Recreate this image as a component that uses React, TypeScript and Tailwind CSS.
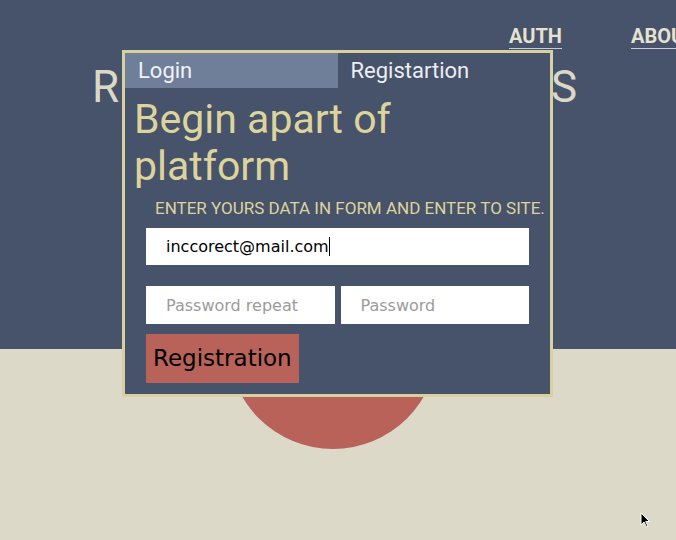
import React from 'react';

const App: React.FC = () => {
  return (
    <div className="relative w-full h-[540px] overflow-hidden bg-[#dcd9c9] font-['Roboto',sans-serif]">
      {/* Hero */}
      <section className="h-[349px] bg-[#47526b]">
        <nav className="flex gap-[69px] pl-[509px] pt-[25px] whitespace-nowrap">
          <a className="text-[20px] leading-[22px] font-bold text-[#e6e2d0] border-b border-[#c9cdd6] pb-[1px]">AUTH</a>
          <a className="text-[20px] leading-[22px] font-bold text-[#e6e2d0] border-b border-[#c9cdd6] pb-[1px]">ABOUT</a>
        </nav>
        <h1 className="mt-[13px] ml-[92px] w-[485px] flex justify-between text-[44px] leading-[50px] font-normal text-[#dbd8c6]">
          <span>R</span>
          <span>EGISTRATION</span>
          <span>S</span>
        </h1>
      </section>

      {/* Lower part */}
      <section className="h-[191px]">
        <div className="w-[210px] h-[210px] rounded-full bg-[#b9625a] ml-[228px] -mt-[110px]" />
      </section>

      {/* Modal */}
      <div className="absolute left-[122px] top-[50px] w-[431px] h-[347px] border-[3px] border-[#d8d09f] bg-[#47526b]">
        <div className="grid grid-cols-2 h-[35px]">
          <button className="bg-[#6f7f9a] text-left px-[13px] text-[22px] text-[#f1f2f4]">
            Login
          </button>
          <button className="text-left px-[13px] text-[22px] text-[#eceef1]">
            Registartion
          </button>
        </div>

        <h2 className="mt-[8px] pl-[9px] text-[41px] leading-[47px] text-[#ddd49c]">
          Begin apart of<br />platform
        </h2>
        <p className="mt-[6px] pl-[30px] text-[17px] leading-[24px] text-[#ddd49c] uppercase">
          Enter yours data in form and enter to site.
        </p>

        <div className="px-[21px] mt-[8px] font-['DejaVu_Sans',sans-serif]">
          <div className="h-[37px] bg-white flex items-center pl-[20px] text-[16px] text-black">
            <span>inccorect@mail.com</span>
            <span className="w-px h-[19px] bg-black" />
          </div>
          <div className="grid grid-cols-2 gap-[6px] mt-[21px]">
            <input
              type="password"
              placeholder="Password repeat"
              className="h-[38px] bg-white pl-[20px] text-[16px] placeholder:text-[#9b9b9b] outline-none"
            />
            <input
              type="password"
              placeholder="Password"
              className="h-[38px] bg-white pl-[20px] text-[16px] placeholder:text-[#9b9b9b] outline-none"
            />
          </div>
          <button className="mt-[10px] w-[153px] h-[49px] bg-[#b9625a] text-black text-[23px] text-left pl-[7px]">
            Registration
          </button>
        </div>
      </div>

      {/* mouse pointer */}
      <svg className="absolute left-[640px] top-[512px]" width="11" height="17" viewBox="0 0 11 17">
        <path d="M1 1 L1 13 L4 10 L6.5 15 L8 14.3 L5.7 9.5 L9.5 9.5 Z" fill="#000" stroke="#fff" strokeWidth="1" />
      </svg>
    </div>
  );
};

export default App;
